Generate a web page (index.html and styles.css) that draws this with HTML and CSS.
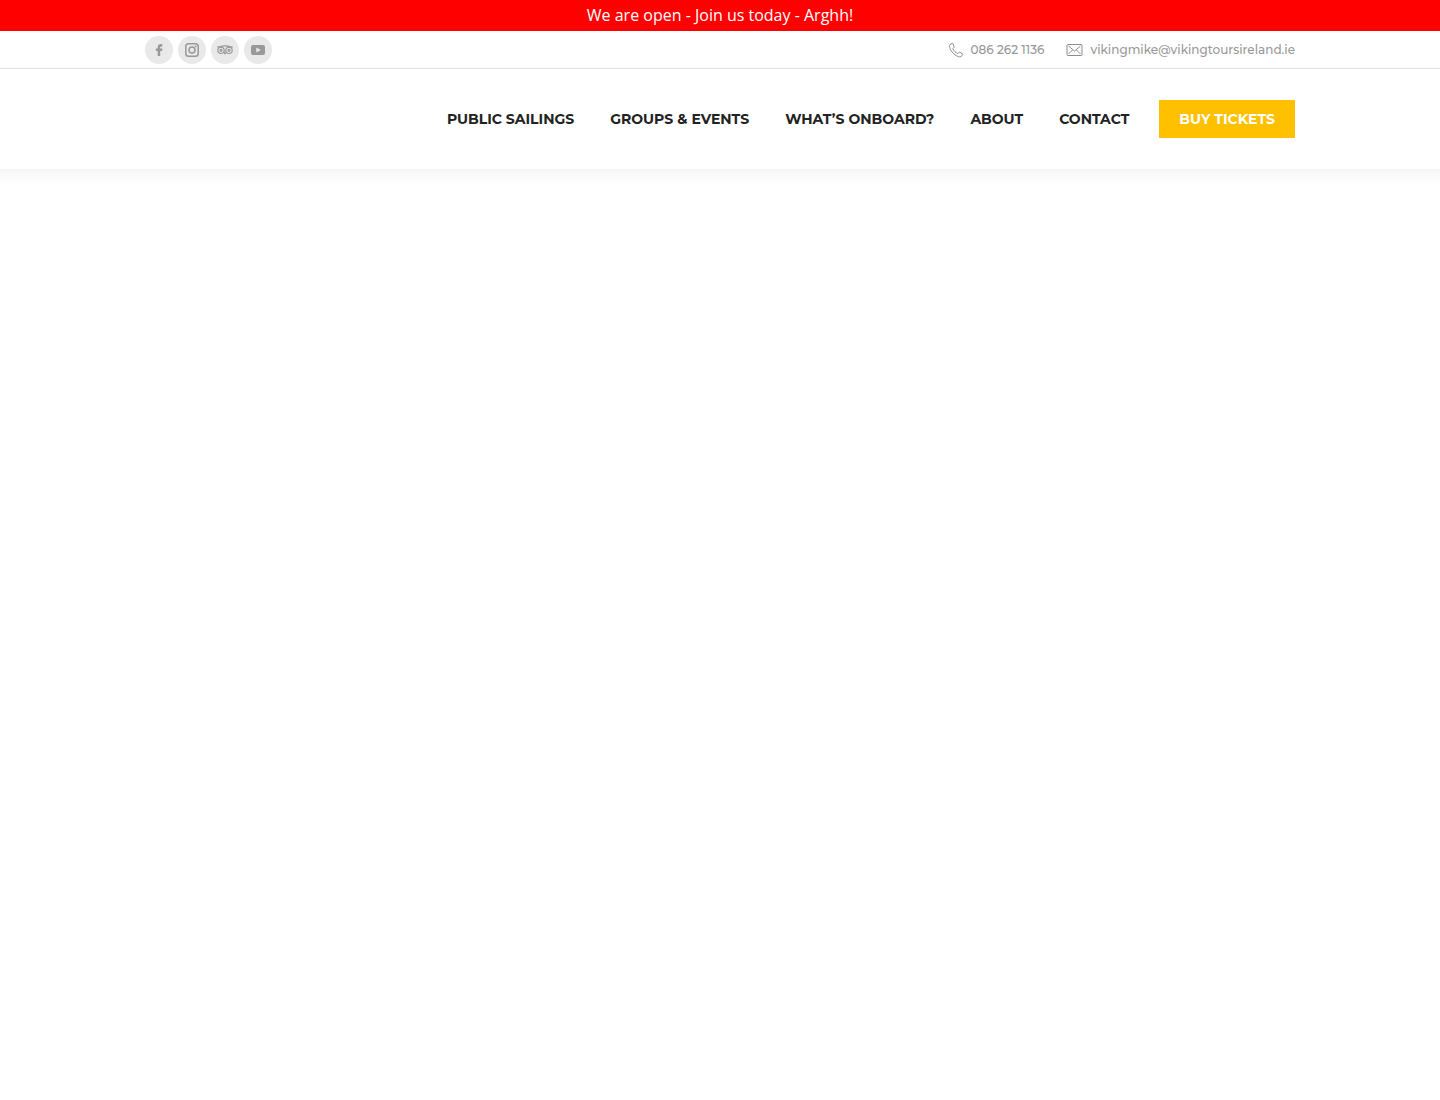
FILE: index.html
```
<!DOCTYPE html>
<html lang="en">
<head>
  <meta charset="UTF-8">
  <meta name="viewport" content="width=device-width, initial-scale=1">
  <title>Viking Tours Ireland</title>
  <link rel="stylesheet" href="styles.css">
</head>
<body>
  <div class="notice">We are open - Join us today - Arghh!</div>

  <header class="header">
    <div class="top-bar">
      <div class="wrap top-bar-inner">
        <div class="social">
          <a href="#" aria-label="Facebook">
            <svg viewBox="0 0 16 16"><path d="M9.200 14V8.900h1.900l.3-2.400H9.200V5.400c0-.6.2-.9.9-.9h1.200V2.200C10.900 2.100 10.500 2 9.900 2 7.900 2 6.700 3.100 6.700 5.100v1.400H4.900v2.400h1.800V14z"/></svg>
          </a>
          <a href="#" aria-label="Instagram">
            <svg class="line" viewBox="0 0 16 16"><rect x="1.800" y="1.800" width="12.400" height="12.400" rx="2.800"/><circle cx="8" cy="8" r="3"/><circle class="dot" cx="11.600" cy="4.400" r=".9"/></svg>
          </a>
          <a href="#" aria-label="TripAdvisor">
            <svg class="line owl" viewBox="0 0 16 16"><circle cx="4" cy="8.300" r="3.200"/><circle cx="12" cy="8.300" r="3.200"/><circle cx="4" cy="8.300" r="1"/><circle cx="12" cy="8.300" r="1"/><path d="M.2 4.900h2.600C5.500 3.500 10.500 3.500 13.200 4.900h2.600M7.200 10.400l.8 1.400.8-1.400"/></svg>
          </a>
          <a href="#" aria-label="YouTube">
            <svg viewBox="0 0 16 16"><path fill-rule="evenodd" d="M3 3h10a2 2 0 0 1 2 2v6a2 2 0 0 1-2 2H3a2 2 0 0 1-2-2V5a2 2 0 0 1 2-2zM6.300 5.400v5.200L10.900 8z"/></svg>
          </a>
        </div>
        <div class="contact">
          <a href="tel:0862621136">
            <svg viewBox="0 0 16 16"><path d="M4.200 1.400L1.900 2.600C.8 4.500 2.300 8.300 4.900 11s6.100 4.500 8.200 3.700l1.500-2.100c.2-.4.100-.7-.2-.9l-2.700-1.500c-.3-.2-.7-.1-.9.2l-.9 1.200C8.100 11.100 5.300 8.400 4.800 6.500l1-1c.3-.3.3-.6.200-.9L5.100 1.800c-.2-.4-.5-.6-.9-.4z"/></svg>
            086 262 1136
          </a>
          <a href="mailto:vikingmike@vikingtoursireland.ie">
            <svg class="mail" viewBox="0 0 17 16"><rect x="1" y="2.500" width="15" height="11" rx="1"/><path d="M2.500 4l6 5 6-5M2.500 12l4-4M14.500 12l-4-4"/></svg>
            vikingmike@vikingtoursireland.ie
          </a>
        </div>
      </div>
    </div>

    <nav class="wrap nav">
      <a href="#">PUBLIC SAILINGS</a>
      <a href="#">GROUPS &amp; EVENTS</a>
      <a href="#">WHAT’S ONBOARD?</a>
      <a href="#">ABOUT</a>
      <a href="#">CONTACT</a>
      <a class="buy" href="#">BUY TICKETS</a>
    </nav>
  </header>
</body>
</html>
```
FILE: styles.css
```
* { box-sizing: border-box; }
body { margin: 0; background: #fff; font-family: Montserrat, Inter, sans-serif; }
a { color: inherit; text-decoration: none; }
.wrap { max-width: 1150px; margin: 0 auto; }

.notice { padding: 3px 16px 4px; background: #f00; color: #fff; font: 16px/24px "Open Sans", sans-serif; text-align: center; }

/* soft shadow under the header */
.header::after { content: ""; display: block; height: 15px; background: linear-gradient(#f6f6f6, #fff); }
.top-bar { border-bottom: 1px solid #e0e0e0; }
.top-bar-inner { display: flex; flex-wrap: wrap; justify-content: space-between; align-items: center; min-height: 37px; }

.social { display: flex; gap: 5px; }
.social a { display: flex; align-items: center; justify-content: center; width: 28px; height: 28px; border-radius: 50%; background: #e9e9e9; }
.social svg { width: 16px; height: 16px; fill: #999; }
.social .line { fill: none; stroke: #999; stroke-width: 1.5; }
.social .owl { stroke-width: 1.2; }
.social .dot { fill: #999; stroke: none; }

.contact { display: flex; gap: 22px; color: #999; font-size: 12px; font-weight: 500; line-height: 20px; }
.contact a { display: flex; align-items: center; gap: 7px; }
.contact svg { width: 16px; height: 16px; fill: none; stroke: #8c8c8c; stroke-width: 1; }
.contact .mail { width: 17px; }

.nav { display: flex; flex-wrap: wrap; justify-content: flex-end; align-items: center; gap: 0 36px; min-height: 100px; color: #222; font-size: 14px; font-weight: 700; line-height: 18px; }
.buy { margin-left: -6px; padding: 10px 20px; background: #ffc000; color: #fff; }
```
